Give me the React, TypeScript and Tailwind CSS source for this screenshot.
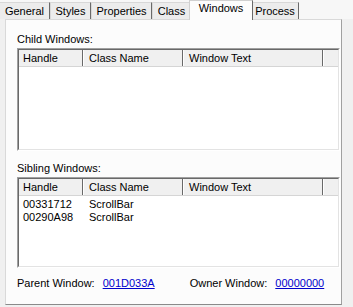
import React from 'react';

// Tabs shown along the top of the property sheet
const tabs = [
    { label: 'General', width: 51 },
    { label: 'Styles', width: 41 },
    { label: 'Properties', width: 61 },
    { label: 'Class', width: 39 },
    { label: 'Windows', width: 64, active: true },
    { label: 'Process', width: 48 },
];

interface Row {
    handle: string;
    className: string;
    text: string;
}

function ListView({ rows, height }: { rows: Row[]; height: number }) {
    return (
        <div
            className="w-[323px] border-t border-l border-[#a0a0a0] border-r border-r-white border-b border-b-white"
            style={{ height }}
        >
            <div className="h-full border-t border-l border-[#696969] border-r border-r-[#e3e3e3] border-b border-b-[#e3e3e3] bg-white">
                <div className="flex h-[17px] bg-[#f0f0f0] border-b border-[#d5d5d5]">
                    <div className="w-[64px] pl-[4px] leading-[16px] border-r border-[#696969]">Handle</div>
                    <div className="w-[100px] pl-[5px] leading-[16px] border-l border-white border-r border-r-[#696969]">
                        Class Name
                    </div>
                    <div className="w-[140px] pl-[5px] leading-[16px] border-l border-white border-r border-r-[#696969]">
                        Window Text
                    </div>
                    <div className="flex-1 border-l border-white"></div>
                </div>
                <div className="pt-[2px]">
                    {rows.map((row) => (
                        <div key={row.handle} className="flex h-[13px] leading-[13px]">
                            <div className="w-[65px] pl-[4px]">{row.handle}</div>
                            <div className="w-[100px] pl-[5px]">{row.className}</div>
                            <div className="flex-1 pl-[5px]">{row.text}</div>
                        </div>
                    ))}
                </div>
            </div>
        </div>
    );
}

export default function App() {
    const siblings: Row[] = [
        { handle: '00331712', className: 'ScrollBar', text: '' },
        { handle: '00290A98', className: 'ScrollBar', text: '' },
    ];

    return (
        <div
            className="w-[353px] h-[307px] bg-[#f0f0f0] overflow-hidden text-[11px] text-black"
            style={{ fontFamily: '"Liberation Sans", Arial, sans-serif' }}
        >
            {/* Tab strip */}
            <div className="flex items-end h-[19px] bg-[#f7f7f7] -ml-[1px]">
                {tabs.map((tab) =>
                    tab.active ? (
                        <div
                            key={tab.label}
                            className="h-[20px] -mb-[1px] -mx-[2px] relative z-10 bg-[#fcfcfc] border-t border-l border-[#d0d0d0] border-r border-r-[#696969] text-center leading-[15px]"
                            style={{ width: tab.width }}
                        >
                            {tab.label}
                        </div>
                    ) : (
                        <div
                            key={tab.label}
                            className="h-[17px] bg-[#ececec] border-t border-l border-[#d8d8d8] border-r border-r-[#6a6a6a] text-center leading-[16px]"
                            style={{ width: tab.width }}
                        >
                            {tab.label}
                        </div>
                    )
                )}
            </div>

            {/* Page body */}
            <div className="ml-[5px] w-[337px] h-[286px] bg-[#fcfcfc] border-t border-l border-[#d9d9d9] border-r border-r-[#a0a0a0] border-b border-b-[#8a8a8a] pl-[11px]">
                <div className="mt-[13px] h-[13px] leading-[13px]">Child Windows:</div>
                <div className="mt-[2px]">
                    <ListView rows={[]} height={103} />
                </div>
                <div className="mt-[11px] h-[13px] leading-[13px]">Sibling Windows:</div>
                <div className="mt-[2px]">
                    <ListView rows={siblings} height={91} />
                </div>
                <div className="mt-[9px] flex h-[13px] leading-[13px]">
                    <span>Parent Window:</span>
                    <a href="#" className="ml-[8px] text-[#0000cc] underline">
                        001D033A
                    </a>
                    <span className="ml-[35px]">Owner Window:</span>
                    <a href="#" className="ml-[8px] text-[#0000cc] underline">
                        00000000
                    </a>
                </div>
            </div>
        </div>
    );
}
